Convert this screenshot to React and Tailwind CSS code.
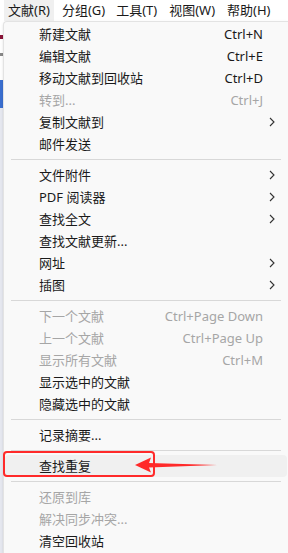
import React from "react";

const font = { fontFamily: '"Noto Sans", "Noto Sans CJK SC", sans-serif' };

const groups = [
  [
    { label: "新建文献", key: "Ctrl+N" },
    { label: "编辑文献", key: "Ctrl+E" },
    { label: "移动文献到回收站", key: "Ctrl+D" },
    { label: "转到...", key: "Ctrl+J", off: true },
    { label: "复制文献到", sub: true },
    { label: "邮件发送" },
  ],
  [
    { label: "文件附件", sub: true },
    { label: "PDF 阅读器", sub: true },
    { label: "查找全文", sub: true },
    { label: "查找文献更新..." },
    { label: "网址", sub: true },
    { label: "插图", sub: true },
  ],
  [
    { label: "下一个文献", key: "Ctrl+Page Down", off: true },
    { label: "上一个文献", key: "Ctrl+Page Up", off: true },
    { label: "显示所有文献", key: "Ctrl+M", off: true },
    { label: "显示选中的文献" },
    { label: "隐藏选中的文献" },
  ],
  [{ label: "记录摘要..." }],
  [{ label: "查找重复", hot: true }],
  [
    { label: "还原到库", off: true },
    { label: "解决同步冲突...", off: true },
    { label: "清空回收站" },
  ],
];

function Chevron() {
  return (
    <svg width="6" height="10" viewBox="0 0 6 10" className="text-[#333]">
      <path d="M1 1l4 4-4 4" fill="none" stroke="currentColor" strokeWidth="1.1" />
    </svg>
  );
}

function Row({ item }) {
  return (
    <div
      className={
        "relative flex items-center h-[22px] pl-[34px] pr-[12px] mx-px rounded " +
        (item.hot ? "bg-[#f0f0f0] " : "") +
        (item.off ? "text-[#a6a6a6]" : "text-[#1a1a1a]")
      }
    >
      <span className="flex-1 text-[13px] leading-none">{item.label}</span>
      {item.key && <span className="text-[13px] leading-none mr-[12px]">{item.key}</span>}
      {item.sub && <Chevron />}
      {item.hot && (
        <>
          <div className="absolute left-[-2px] top-[-4px] w-[152px] h-[26px] border-2 border-[#ff2a2a] rounded-[4px]" />
          <svg className="absolute left-[128px] top-[1px]" width="86" height="18" viewBox="0 0 86 18">
            <path d="M2 9 L18 1.5 L16 7 L84 9 L16 11.5 L18 16.5 Z" fill="#ff2a2a" />
          </svg>
        </>
      )}
    </div>
  );
}

export default function App() {
  return (
    <div className="w-[288px] h-[553px] overflow-hidden bg-white flex flex-col" style={font}>
      <div className="flex items-center h-[21px] text-[13px] text-[#1a1a1a] shrink-0">
        <span className="ml-[4px] px-[4px] h-[21px] flex items-center bg-[#f0f0f0]">文献(R)</span>
        <span className="ml-[8px]">分组(G)</span>
        <span className="ml-[11px]">工具(T)</span>
        <span className="ml-[12px]">视图(W)</span>
        <span className="ml-[12px]">帮助(H)</span>
      </div>
      <div className="flex flex-1">
        <div className="w-[3px] flex flex-col">
          <div className="h-[14px]" />
          <div className="h-[4px] bg-[#8a1538]" />
          <div className="h-[14px]" />
          <div className="h-[3px] bg-[#888]" />
          <div className="h-[24px]" />
          <div className="h-[28px] bg-[#3b6fd0]" />
          <div className="flex-1 bg-[#e6e8f0]" />
        </div>
        <div className="flex-1 bg-[#f9f9f9] border-l border-t border-[#e3e3e3] rounded-tl-[4px] pt-[1px] shadow">
          {groups.map((g, i) => (
            <div key={i}>
              {i > 0 && (
                <div className="h-[9px] flex items-center px-[7px]">
                  <div className="h-px flex-1 bg-[#d8d8d8]" />
                </div>
              )}
              {g.map((item) => (
                <Row key={item.label} item={item} />
              ))}
            </div>
          ))}
        </div>
      </div>
    </div>
  );
}
